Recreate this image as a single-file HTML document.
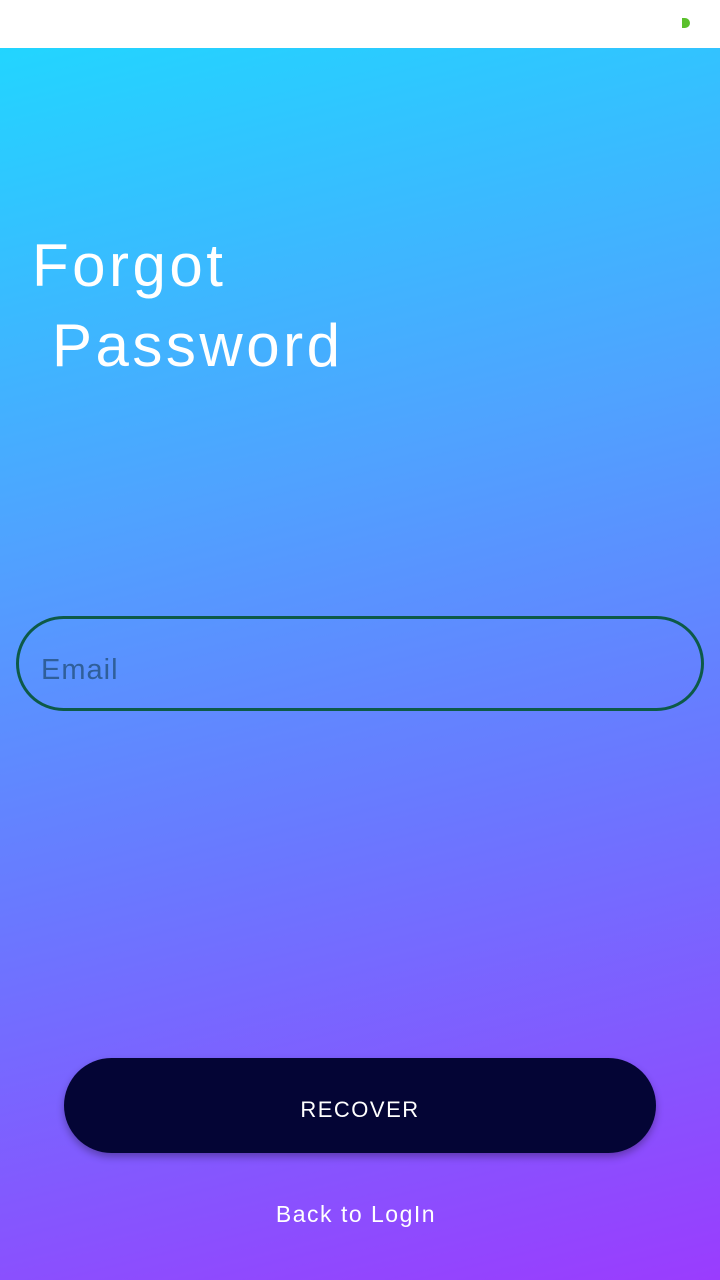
<!DOCTYPE html>
<html><head><style>
body{margin:0;width:720px;height:1280px;overflow:hidden;font-family:"Liberation Sans",sans-serif;}
.top{position:absolute;left:0;top:0;width:720px;height:48px;background:#fff;}
.dot{position:absolute;left:682px;top:18px;width:8px;height:10px;background:#5ac02c;border-radius:0 5px 5px 0;}
.bg{position:absolute;left:0;top:48px;width:720px;height:1232px;background:linear-gradient(166deg,#22d5ff 0%,#4fa3ff 35%,#6a78ff 62%,#9a3cfe 100%);}
.t{position:absolute;color:#fff;font-size:60px;letter-spacing:3.5px;line-height:1;}
.field{position:absolute;left:16px;top:616px;width:688px;height:95px;border:3px solid #0d5a48;border-radius:48px;box-sizing:border-box;}
.field span{position:absolute;left:22px;top:35px;font-size:29px;color:#2f5f9a;letter-spacing:1px;}
.btn{position:absolute;left:64px;top:1058px;width:592px;height:95px;background:#040535;border-radius:48px;box-shadow:0 4px 8px rgba(0,0,0,.3);color:#fff;text-align:center;line-height:103px;font-size:22px;letter-spacing:1.5px;}
.back{position:absolute;left:0;width:712px;top:1201px;text-align:center;color:#fff;font-size:23px;letter-spacing:1.5px;}
</style></head><body>
<div class="top"><div class="dot"></div></div>
<div class="bg"></div>
<div class="t" style="left:32px;top:236px">Forgot</div>
<div class="t" style="left:52px;top:316px">Password</div>
<div class="field"><span>Email</span></div>
<div class="btn">RECOVER</div>
<div class="back">Back to LogIn</div>
</body></html>
